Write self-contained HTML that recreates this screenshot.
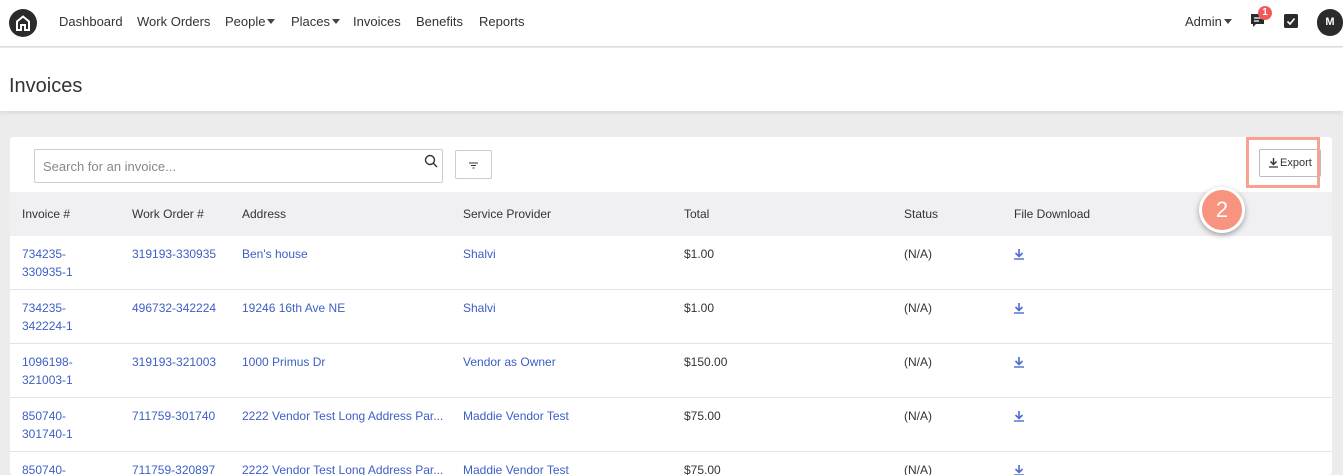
<!DOCTYPE html>
<html><head><style>
*{box-sizing:border-box;margin:0;padding:0}
html,body{width:1343px;height:475px;overflow:hidden}
body{background:#ececec;font-family:"Liberation Sans",sans-serif;color:#333;position:relative}
.nav{position:absolute;left:0;top:0;width:1343px;height:47px;background:#fff;border-bottom:1px solid #ddd}
.nav span{position:absolute;top:14px;font-size:13px;color:#333}
.tri{display:inline-block;width:0;height:0;border-left:4px solid transparent;border-right:4px solid transparent;border-top:5px solid #444;margin-left:2px;vertical-align:2px}
.head{position:absolute;left:0;top:48px;width:1343px;height:63px;background:#fff;box-shadow:0 2px 4px rgba(0,0,0,.08)}
.head h1{position:absolute;left:9px;top:27px;font-weight:normal;font-size:20px;color:#333}
.card{position:absolute;left:10px;top:137px;width:1322px;height:338px;background:#fff;border-radius:3px;overflow:hidden}
.search{position:absolute;left:24px;top:12px;width:409px;height:34px;border:1px solid #ccc;border-radius:2px;font-size:13px;color:#888;padding:9px 8px}
.filt{position:absolute;left:445px;top:13px;width:37px;height:29px;border:1px solid #ccc;border-radius:2px}
.thead{position:absolute;left:0;top:55px;width:1322px;height:44px;background:#f0f0f2}
.c{position:absolute;font-size:12px;line-height:18px}
.row{position:absolute;left:0;width:1322px;height:54px;border-bottom:1px solid #e4e4e4}
a{color:#3d5fc4;text-decoration:none}
.dl{position:absolute;left:1004px;top:13px}
</style></head><body>
<div class="nav">
<svg style="position:absolute;left:9px;top:9px" width="28" height="28" viewBox="0 0 28 28"><circle cx="14" cy="14" r="14" fill="#2b2b2b"/><path d="M8 21V12.5L14 7.5L20 12.5V21H16V16H12V21Z" fill="none" stroke="#fff" stroke-width="2"/></svg>
<span style="left:59px">Dashboard</span>
<span style="left:137px">Work Orders</span>
<span style="left:225px">People<i class="tri"></i></span>
<span style="left:291px">Places<i class="tri"></i></span>
<span style="left:353px">Invoices</span>
<span style="left:416px">Benefits</span>
<span style="left:479px">Reports</span>
<span style="left:1185px">Admin<i class="tri"></i></span>
<svg style="position:absolute;left:1250px;top:13px" width="16" height="16"><path d="M1 1H14V11H6L3 14V11H1Z" fill="#2b2b2b"/><path d="M4 5H11M4 8H9" stroke="#fff" stroke-width="1.2"/></svg>
<div style="position:absolute;left:1258px;top:6px;width:14px;height:14px;border-radius:7px;background:#f05a5a;color:#fff;font-size:10px;text-align:center;line-height:14px;font-weight:bold">1</div>
<svg style="position:absolute;left:1284px;top:14px" width="14" height="14"><rect width="14" height="14" rx="1.5" fill="#2b2b2b"/><path d="M3.5 7.5L6 10L10.5 4.5" stroke="#fff" stroke-width="1.6" fill="none"/></svg>
<div style="position:absolute;left:1317px;top:9px;width:26px;height:27px;border-radius:14px;background:#2b2b2b;color:#fff;font-size:11px;font-weight:bold;line-height:27px;text-align:center">M</div>
</div>
<div class="head"><h1>Invoices</h1></div>
<div class="card">
<div class="search">Search for an invoice...</div>
<svg style="position:absolute;left:414px;top:17px" width="14" height="14"><circle cx="6" cy="6" r="4.5" stroke="#333" stroke-width="1.4" fill="none"/><path d="M9.3 9.3L13 13" stroke="#333" stroke-width="1.4"/></svg>
<div class="filt"><svg style="position:absolute;left:13px;top:11px" width="10" height="7"><path d="M0 1H9M2 3.5H7M3.5 6H5.5" stroke="#333"/></svg></div>
<div style="position:absolute;left:1236px;top:0;width:74px;height:51px;border:3px solid #f7a193"></div>
<div style="position:absolute;left:1249px;top:12px;width:62px;height:28px;border:1px solid #bbb;border-radius:2px;font-size:11px;color:#333;line-height:26px;padding-left:20px">Export</div>
<svg style="position:absolute;left:1259px;top:21px" width="9" height="10"><path d="M4.5 0V6M1.5 3.5L4.5 6.5L7.5 3.5" stroke="#333" stroke-width="1.4" fill="none"/><path d="M0 9H9" stroke="#333" stroke-width="1.2"/></svg>
<div class="thead">
<div class="c" style="left:12px;top:13px">Invoice #</div>
<div class="c" style="left:122px;top:13px">Work Order #</div>
<div class="c" style="left:232px;top:13px">Address</div>
<div class="c" style="left:453px;top:13px">Service Provider</div>
<div class="c" style="left:674px;top:13px">Total</div>
<div class="c" style="left:894px;top:13px">Status</div>
<div class="c" style="left:1004px;top:13px">File Download</div>
</div>
<div style="position:absolute;left:1189px;top:50px;width:46px;height:46px;border-radius:23px;background:#f7937f;border:3px solid #fff;box-shadow:0 2px 6px rgba(0,0,0,.35);color:#fff;font-size:22px;text-align:center;line-height:40px;z-index:2">2</div>
<div class="row" style="top:99px"><div class="c" style="left:12px;top:9px"><a>734235-<br>330935-1</a></div><div class="c" style="left:122px;top:9px"><a>319193-330935</a></div><div class="c" style="left:232px;top:9px"><a>Ben's house</a></div><div class="c" style="left:453px;top:9px"><a>Shalvi</a></div><div class="c" style="left:674px;top:9px">$1.00</div><div class="c" style="left:894px;top:9px">(N/A)</div><svg class="dl" width="10" height="11"><path d="M5 0V7M1.5 4L5 7.5L8.5 4" stroke="#4d6ad0" stroke-width="1.6" fill="none"/><path d="M0 10H10" stroke="#4d6ad0" stroke-width="1.4"/></svg></div>
<div class="row" style="top:153px"><div class="c" style="left:12px;top:9px"><a>734235-<br>342224-1</a></div><div class="c" style="left:122px;top:9px"><a>496732-342224</a></div><div class="c" style="left:232px;top:9px"><a>19246 16th Ave NE</a></div><div class="c" style="left:453px;top:9px"><a>Shalvi</a></div><div class="c" style="left:674px;top:9px">$1.00</div><div class="c" style="left:894px;top:9px">(N/A)</div><svg class="dl" width="10" height="11"><path d="M5 0V7M1.5 4L5 7.5L8.5 4" stroke="#4d6ad0" stroke-width="1.6" fill="none"/><path d="M0 10H10" stroke="#4d6ad0" stroke-width="1.4"/></svg></div>
<div class="row" style="top:207px"><div class="c" style="left:12px;top:9px"><a>1096198-<br>321003-1</a></div><div class="c" style="left:122px;top:9px"><a>319193-321003</a></div><div class="c" style="left:232px;top:9px"><a>1000 Primus Dr</a></div><div class="c" style="left:453px;top:9px"><a>Vendor as Owner</a></div><div class="c" style="left:674px;top:9px">$150.00</div><div class="c" style="left:894px;top:9px">(N/A)</div><svg class="dl" width="10" height="11"><path d="M5 0V7M1.5 4L5 7.5L8.5 4" stroke="#4d6ad0" stroke-width="1.6" fill="none"/><path d="M0 10H10" stroke="#4d6ad0" stroke-width="1.4"/></svg></div>
<div class="row" style="top:261px"><div class="c" style="left:12px;top:9px"><a>850740-<br>301740-1</a></div><div class="c" style="left:122px;top:9px"><a>711759-301740</a></div><div class="c" style="left:232px;top:9px"><a>2222 Vendor Test Long Address Par...</a></div><div class="c" style="left:453px;top:9px"><a>Maddie Vendor Test</a></div><div class="c" style="left:674px;top:9px">$75.00</div><div class="c" style="left:894px;top:9px">(N/A)</div><svg class="dl" width="10" height="11"><path d="M5 0V7M1.5 4L5 7.5L8.5 4" stroke="#4d6ad0" stroke-width="1.6" fill="none"/><path d="M0 10H10" stroke="#4d6ad0" stroke-width="1.4"/></svg></div>
<div class="row" style="top:315px"><div class="c" style="left:12px;top:9px"><a>850740-<br>320897-1</a></div><div class="c" style="left:122px;top:9px"><a>711759-320897</a></div><div class="c" style="left:232px;top:9px"><a>2222 Vendor Test Long Address Par...</a></div><div class="c" style="left:453px;top:9px"><a>Maddie Vendor Test</a></div><div class="c" style="left:674px;top:9px">$75.00</div><div class="c" style="left:894px;top:9px">(N/A)</div><svg class="dl" width="10" height="11"><path d="M5 0V7M1.5 4L5 7.5L8.5 4" stroke="#4d6ad0" stroke-width="1.6" fill="none"/><path d="M0 10H10" stroke="#4d6ad0" stroke-width="1.4"/></svg></div>
</div>
</body></html>
